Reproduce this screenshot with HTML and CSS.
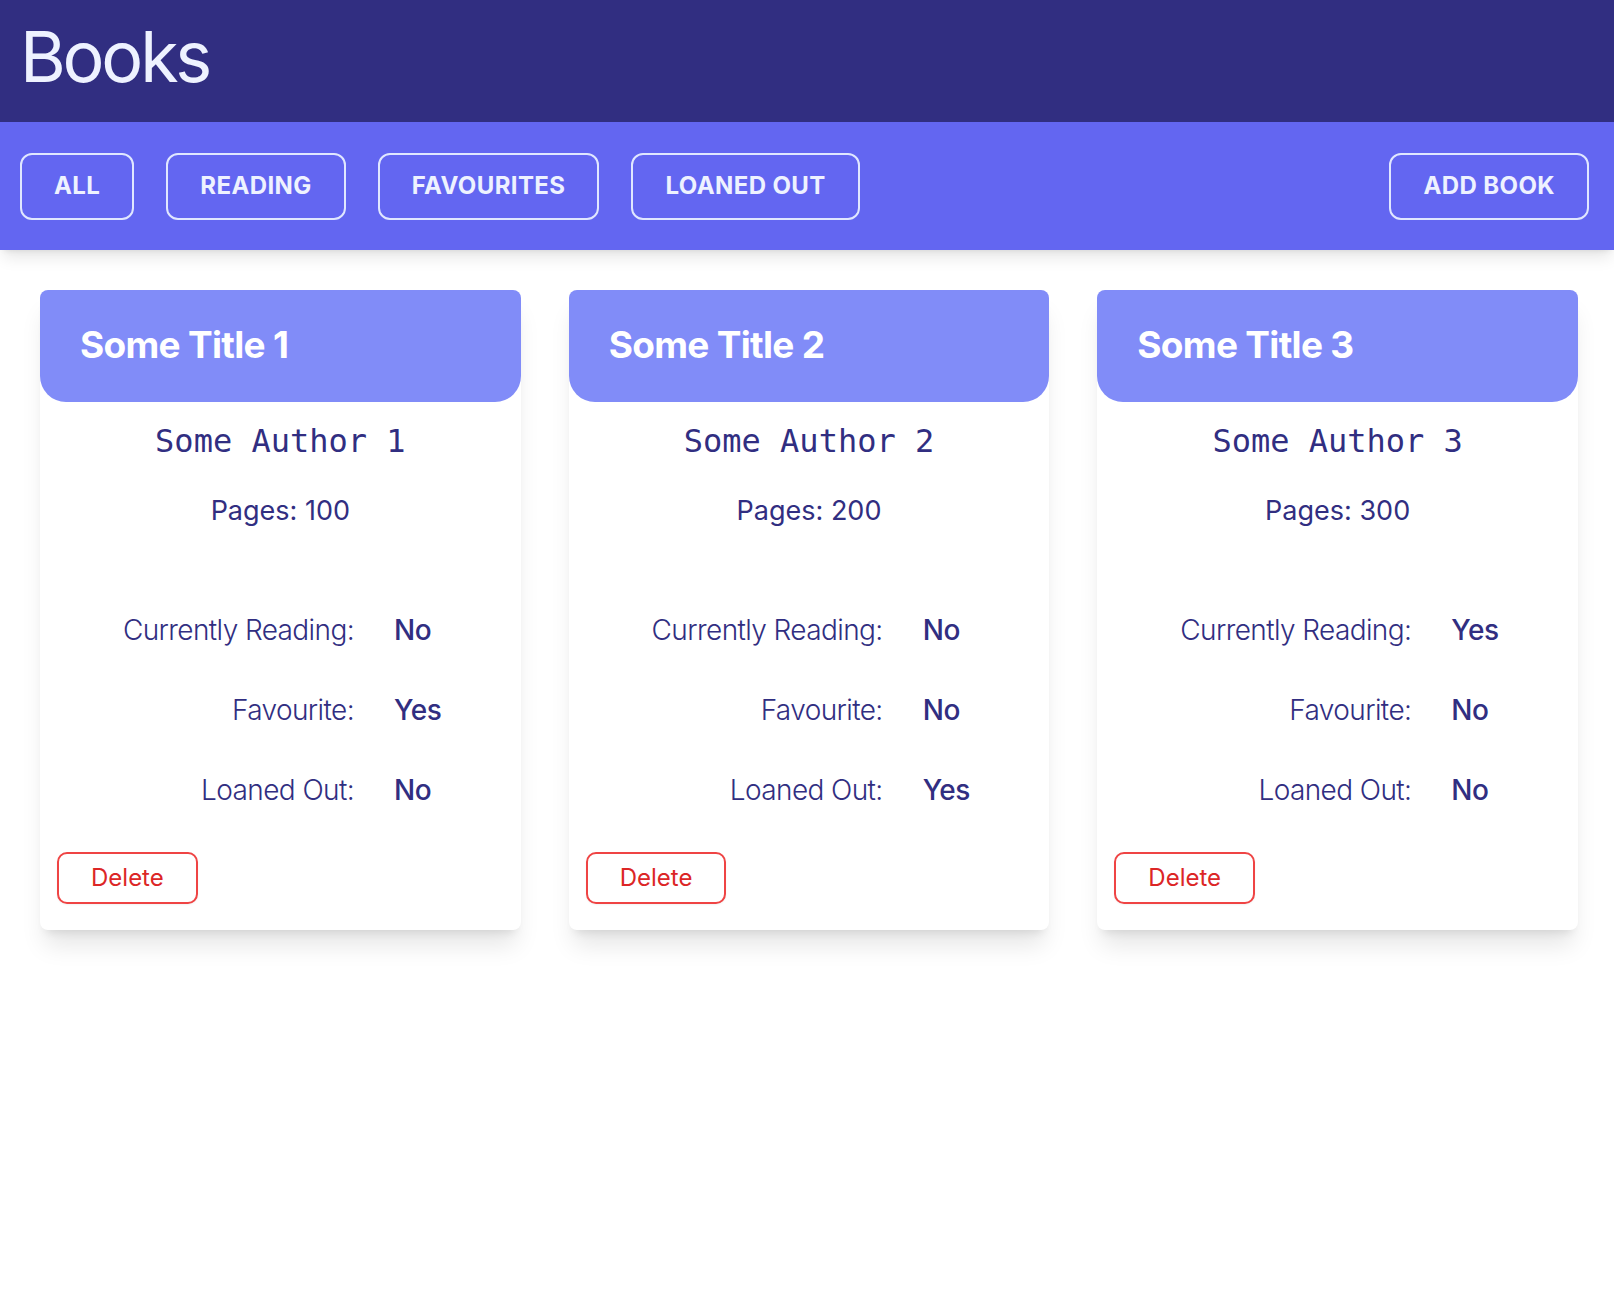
FILE: index.html
```
<!DOCTYPE html>
<html lang="en">
<head>
<meta charset="utf-8">
<title>Books</title>
<link rel="stylesheet" href="styles.css">
</head>
<body>
<header class="top">
  <div class="brand">
    <h1 class="brand-title">Books</h1>
  </div>
  <nav class="toolbar">
    <div class="filters">
      <button class="nav-btn">All</button>
      <button class="nav-btn">Reading</button>
      <button class="nav-btn">Favourites</button>
      <button class="nav-btn">Loaned Out</button>
    </div>
    <button class="nav-btn">Add Book</button>
  </nav>
</header>
<main class="grid">
  <article class="card">
    <div class="card-head"><h2 class="card-title">Some Title 1</h2></div>
    <p class="author">Some Author 1</p>
    <p class="pages">Pages: 100</p>
    <dl class="facts">
      <dt>Currently Reading:</dt><dd>No</dd>
      <dt>Favourite:</dt><dd>Yes</dd>
      <dt>Loaned Out:</dt><dd>No</dd>
    </dl>
    <div class="card-foot"><button class="delete-btn">Delete</button></div>
  </article>
  <article class="card">
    <div class="card-head"><h2 class="card-title">Some Title 2</h2></div>
    <p class="author">Some Author 2</p>
    <p class="pages">Pages: 200</p>
    <dl class="facts">
      <dt>Currently Reading:</dt><dd>No</dd>
      <dt>Favourite:</dt><dd>No</dd>
      <dt>Loaned Out:</dt><dd>Yes</dd>
    </dl>
    <div class="card-foot"><button class="delete-btn">Delete</button></div>
  </article>
  <article class="card">
    <div class="card-head"><h2 class="card-title">Some Title 3</h2></div>
    <p class="author">Some Author 3</p>
    <p class="pages">Pages: 300</p>
    <dl class="facts">
      <dt>Currently Reading:</dt><dd>Yes</dd>
      <dt>Favourite:</dt><dd>No</dd>
      <dt>Loaned Out:</dt><dd>No</dd>
    </dl>
    <div class="card-foot"><button class="delete-btn">Delete</button></div>
  </article>
</main>
</body>
</html>
```
FILE: styles.css
```
* { box-sizing: border-box; }
html, body { margin: 0; padding: 0; }
body {
  font-family: Inter, "Noto Sans", "Liberation Sans", sans-serif;
  background: #ffffff;
  color: #312e81;
  width: 1614px;
  min-height: 1312px;
}
.top {
  box-shadow: 0 10px 15px -3px rgba(0,0,0,0.1), 0 4px 6px -4px rgba(0,0,0,0.1);
  position: relative;
  z-index: 1;
}
.brand {
  background: #312e81;
  padding: 21px 20px 29px;
}
.brand-title {
  margin: 0;
  font-size: 70px;
  line-height: 72px;
  font-weight: 400;
  color: #eef2ff;
  letter-spacing: -3.2px;
}
.toolbar {
  background: #6366f1;
  padding: 31px 25px 30px 20px;
  display: flex;
  justify-content: space-between;
  align-items: center;
}
.filters {
  display: flex;
  gap: 32px;
}
.nav-btn {
  font-family: Inter, "Noto Sans", sans-serif;
  background: transparent;
  color: #eef2ff;
  border: 2px solid #e0e7ff;
  border-radius: 12px;
  padding: 15px 32px 16px;
  font-size: 24px;
  line-height: 32px;
  font-weight: 700;
  letter-spacing: 0.4px;
  text-transform: uppercase;
  cursor: pointer;
}
.grid {
  display: grid;
  grid-template-columns: repeat(3, 1fr);
  gap: 48px;
  padding: 40px 36px 40px 40px;
  align-items: start;
}
.card {
  background: #ffffff;
  border-radius: 8px;
  box-shadow: 0 20px 25px -5px rgba(0,0,0,0.1), 0 8px 10px -6px rgba(0,0,0,0.1);
  display: flex;
  flex-direction: column;
}
.card-head {
  background: #818cf8;
  border-radius: 8px 8px 26px 26px;
  padding: 35px 40px 37px;
}
.card-title {
  margin: 0;
  color: #ffffff;
  font-size: 37px;
  line-height: 40px;
  font-weight: 700;
  letter-spacing: -0.7px;
}
.author {
  margin: 19px 0 0;
  text-align: center;
  font-family: "DejaVu Sans Mono", "Liberation Mono", monospace;
  font-size: 32px;
  line-height: 40px;
  color: #312e81;
}
.pages {
  margin: 32px 0 0;
  text-align: center;
  font-size: 27px;
  line-height: 36px;
  font-weight: 400;
}
.facts {
  margin: 81px 0 0;
  display: grid;
  grid-template-columns: 314px 1fr;
  column-gap: 40px;
  row-gap: 40px;
}
.facts dt {
  text-align: right;
  font-size: 28px;
  line-height: 40px;
  font-weight: 300;
  letter-spacing: -0.6px;
}
.facts dd {
  margin: 0;
  font-size: 28px;
  line-height: 40px;
  font-weight: 500;
  letter-spacing: -0.4px;
}
.card-foot {
  padding: 42px 16px 26px 17px;
}
.delete-btn {
  font-family: Inter, "Noto Sans", sans-serif;
  background: #ffffff;
  color: #dc2626;
  border: 2px solid #ef4444;
  border-radius: 10px;
  padding: 8px 32px;
  font-size: 24px;
  line-height: 32px;
  font-weight: 400;
  box-shadow: 0 1px 2px rgba(0,0,0,0.05);
  cursor: pointer;
}
```
